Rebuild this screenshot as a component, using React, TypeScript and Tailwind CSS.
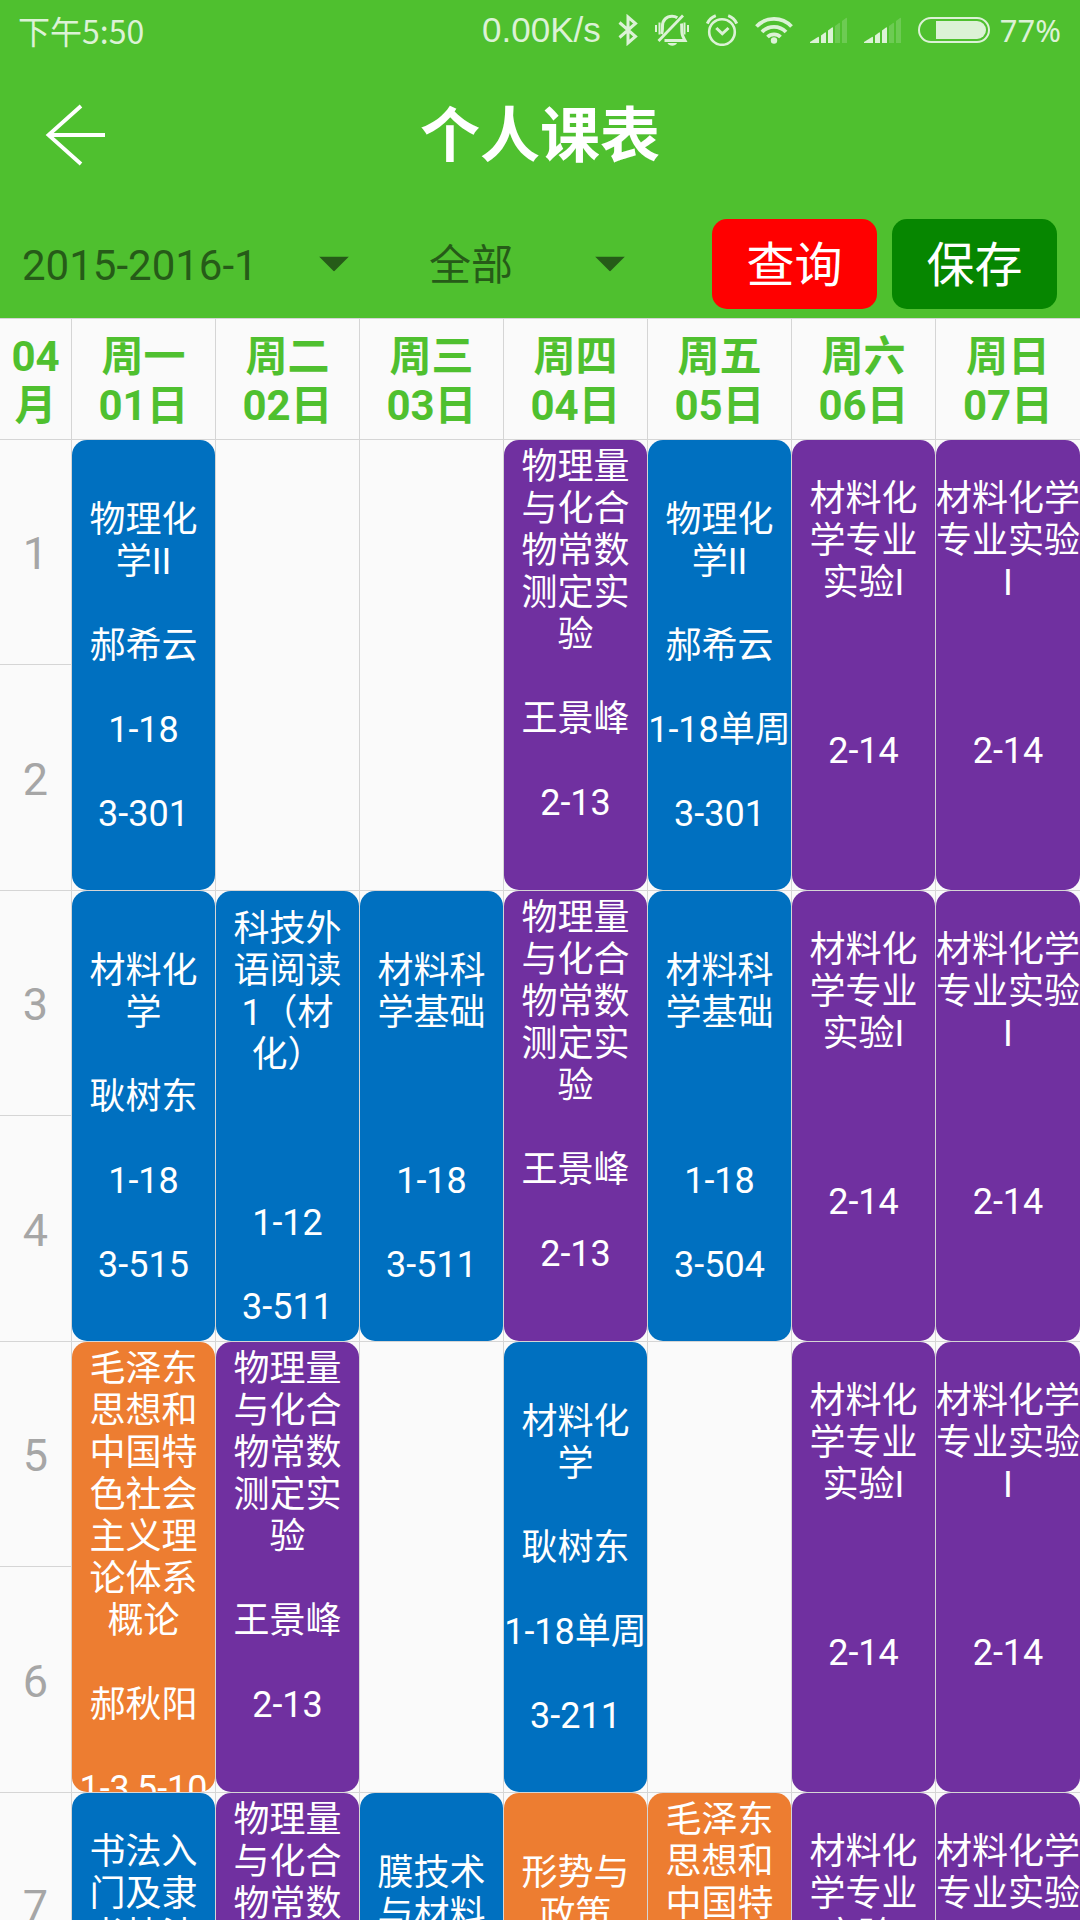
import React from "react";

type Kind = "blue" | "purple" | "orange";

interface Course {
  name: React.ReactNode;
  teacher?: string;
  weeks?: string;
  room?: string;
  kind: Kind;
}

const CARD_COLORS: Record<Kind, string> = {
  blue: "bg-[#0070c0]",
  purple: "bg-[#7030a0]",
  orange: "bg-[#ed7d31]",
};

const DAYS = ["周一", "周二", "周三", "周四", "周五", "周六", "周日"];

const physLab: Course = { name: "物理量与化合物常数测定实验", teacher: "王景峰", weeks: "2-13", kind: "purple" };
const majorLab: Course = { name: "材料化学专业实验I", weeks: "2-14", kind: "purple" };
const maoCourse: Course = {
  name: "毛泽东思想和中国特色社会主义理论体系概论",
  teacher: "郝秋阳",
  weeks: "1-3,5-10",
  kind: "orange",
};
const readingCourse: Course = {
  name: (
    <>
      科技外语阅读<span className="whitespace-nowrap">1（材</span>化）
    </>
  ),
  weeks: "1-12",
  room: "3-511",
  kind: "blue",
};

const BLOCKS: (Course | null)[][] = [
  [
    { name: "物理化学II", teacher: "郝希云", weeks: "1-18", room: "3-301", kind: "blue" },
    null,
    null,
    physLab,
    { name: "物理化学II", teacher: "郝希云", weeks: "1-18单周", room: "3-301", kind: "blue" },
    majorLab,
    majorLab,
  ],
  [
    { name: "材料化学", teacher: "耿树东", weeks: "1-18", room: "3-515", kind: "blue" },
    readingCourse,
    { name: "材料科学基础", weeks: "1-18", room: "3-511", kind: "blue" },
    physLab,
    { name: "材料科学基础", weeks: "1-18", room: "3-504", kind: "blue" },
    majorLab,
    majorLab,
  ],
  [
    maoCourse,
    physLab,
    null,
    { name: "材料化学", teacher: "耿树东", weeks: "1-18单周", room: "3-211", kind: "blue" },
    null,
    majorLab,
    majorLab,
  ],
  [
    { name: "书法入门及隶书技法", kind: "blue" },
    physLab,
    { name: "膜技术与材料", kind: "blue" },
    { name: "形势与政策", kind: "orange" },
    maoCourse,
    majorLab,
    majorLab,
  ],
];

function BluetoothIcon() {
  return (
    <svg width="20" height="32" viewBox="0 0 20 32" fill="none" stroke="currentColor" strokeWidth="3">
      <path d="M1.5 8.5 L17.5 22.5 L10 29 V3 L17.5 9.5 L1.5 23.5" />
    </svg>
  );
}

function MutedBellIcon() {
  return (
    <svg width="34" height="32" viewBox="0 0 34 32" fill="none" stroke="currentColor">
      <path d="M1 11 V18 M4.5 8.5 V20.5 M29.5 8.5 V20.5 M33 11 V18" strokeWidth="2" />
      <path d="M6.5 20 C7.5 18 7.5 16 7.5 12 C7.5 6 11.5 2.2 17 2.2 C19 2.2 20.8 2.7 22.3 3.8" strokeWidth="3" />
      <path d="M26.5 9.5 C27 12 26.4 18 27.4 21 C28 23 29 24.5 30 26.5 H9.5" strokeWidth="3" />
      <path d="M3.5 27 L28 1.5" strokeWidth="2.8" />
      <path d="M12.5 29 H22 C20.5 32.6 14 32.6 12.5 29 Z" fill="currentColor" stroke="none" />
    </svg>
  );
}

function AlarmIcon() {
  return (
    <svg width="32" height="32" viewBox="0 0 32 32" fill="none" stroke="currentColor">
      <circle cx="16" cy="18" r="12.8" strokeWidth="2.6" />
      <path d="M10.3 14 L16.3 19.8 L22.5 14" strokeWidth="3" />
      <path d="M1.3 9.5 C3 5.8 6 3 9.8 1.6 M30.7 9.5 C29 5.8 26 3 22.2 1.6" strokeWidth="3" />
    </svg>
  );
}

function WifiIcon() {
  return (
    <svg width="38" height="28" viewBox="0 0 38 28" fill="none" stroke="currentColor" strokeWidth="3.8">
      <path d="M1.5 10.5 A24 24 0 0 1 36.5 10.5" />
      <path d="M7 16 A16.5 16.5 0 0 1 31 16" />
      <path d="M12.5 21 A9.2 9.2 0 0 1 25.5 21" />
      <circle cx="19" cy="24.5" r="3.2" fill="currentColor" stroke="none" />
    </svg>
  );
}

function SignalIcon() {
  return (
    <svg width="37" height="26" viewBox="0 0 37 26" fill="currentColor">
      <path d="M0 26 V25 L8 20 Q9 19.5 9 20.5 V26 Z" />
      <path d="M11 26 V18.5 L15 15.5 Q16 15 16 16 V26 Z" />
      <path d="M18 26 V13.5 L22 10.5 Q23 10 23 11 V26 Z" />
      <path d="M25 26 V9 L29 6 Q30 5.5 30 6.5 V26 Z" opacity="0.22" />
      <path d="M32 26 V4 L36 1 Q37 .5 37 1.5 V26 Z" opacity="0.22" />
    </svg>
  );
}

function BatteryIcon() {
  return (
    <svg width="72" height="26" viewBox="0 0 72 26" fill="none">
      <rect x="1" y="1" width="70" height="24" rx="12" stroke="currentColor" strokeWidth="2" />
      <path d="M18 4 H59 A9 9 0 0 1 59 22 H18 Z" fill="currentColor" />
    </svg>
  );
}

function StatusBar() {
  return (
    <div className="flex h-[60px] items-center justify-between pl-[18px] pr-[19px] text-[#dcf2d6]">
      <span className="font-['Noto_Sans_CJK_SC',sans-serif] text-[32px] leading-10">下午5:50</span>
      <div className="flex items-center gap-[17px]">
        <span className="font-['Liberation_Sans',sans-serif] text-[35px] leading-10">0.00K/s</span>
        <BluetoothIcon />
        <MutedBellIcon />
        <AlarmIcon />
        <WifiIcon />
        <SignalIcon />
        <SignalIcon />
        <div className="flex items-center gap-[10px]">
          <BatteryIcon />
          <span className="font-['Noto_Sans',sans-serif] text-[31px] leading-10">77%</span>
        </div>
      </div>
    </div>
  );
}

function Spinner({ label, options, width }: { label: string; options: string[]; width: string }) {
  return (
    <div className={`relative ${width}`}>
      <select
        aria-label={label}
        className="w-full appearance-none bg-transparent pt-1 text-[42px] leading-[50px] text-[#265b18] outline-none"
      >
        {options.map((o) => (
          <option key={o}>{o}</option>
        ))}
      </select>
      <svg
        className="pointer-events-none absolute right-0 top-1/2 -translate-y-1/2"
        width="30"
        height="15"
        viewBox="0 0 30 15"
        fill="#265b18"
      >
        <path d="M0 0 H30 L15 15 Z" />
      </svg>
    </div>
  );
}

function CourseCard({ course }: { course: Course }) {
  return (
    <div
      className={`flex h-[450px] flex-col justify-center-safe gap-[42px] overflow-hidden rounded-[15px] pb-[2px] pt-[6px] text-center text-[36px] leading-[42px] text-white ${CARD_COLORS[course.kind]}`}
    >
      <p className="shrink-0">{course.name}</p>
      <p className="min-h-[42px] shrink-0">{course.teacher}</p>
      <p className="min-h-[42px] shrink-0 whitespace-nowrap">{course.weeks}</p>
      <p className="min-h-[42px] shrink-0">{course.room}</p>
    </div>
  );
}

function Timetable() {
  const headCell =
    "border-y border-r border-[#d5d5d5] px-0 pb-[9px] pt-[13px] text-[42px] font-bold leading-[49px] text-[#4fc02f] last:border-r-0";
  const numberCell =
    "border-b border-r border-[#d5d5d5] p-0 pt-1 text-center text-[45px] font-normal text-[#a6a6a6]";
  return (
    <table className="w-full table-fixed border-separate border-spacing-0">
      <colgroup>
        <col className="w-1/15" />
        {DAYS.map((d) => (
          <col key={d} className="w-2/15" />
        ))}
      </colgroup>
      <thead>
        <tr>
          <th scope="col" className={headCell}>
            04
            <br />月
          </th>
          {DAYS.map((d, i) => (
            <th key={d} scope="col" className={headCell}>
              {d}
              <br />0{i + 1}日
            </th>
          ))}
        </tr>
      </thead>
      <tbody>
        {BLOCKS.map((block, b) => (
          <React.Fragment key={b}>
            <tr className="h-[225px]">
              <th scope="row" className={numberCell}>
                {b * 2 + 1}
              </th>
              {block.map((course, d) => (
                <td
                  key={d}
                  rowSpan={2}
                  className="border-b border-r border-[#d5d5d5] p-0 last:border-r-0"
                >
                  {course && <CourseCard course={course} />}
                </td>
              ))}
            </tr>
            <tr className="h-[226px]">
              <th scope="row" className={numberCell}>
                {b * 2 + 2}
              </th>
            </tr>
          </React.Fragment>
        ))}
      </tbody>
    </table>
  );
}

export default function App() {
  return (
    <div
      lang="zh-CN"
      className="flex h-screen flex-col overflow-hidden bg-[#fafafa] font-[Roboto,'Noto_Sans_CJK_SC',sans-serif]"
    >
      <header className="shrink-0 bg-[#4fc02f]">
        <StatusBar />
        <div className="grid h-[150px] grid-cols-[1fr_auto_1fr] items-center">
          <button type="button" aria-label="返回" className="justify-self-start pl-[45px] text-white">
            <svg width="61" height="62" viewBox="0 0 61 62" fill="none" stroke="currentColor" strokeWidth="3.8">
              <path d="M36 2 L3.5 31 L36 60 M3.5 31 H60" />
            </svg>
          </button>
          <h1 className="pt-1 text-[60px] font-bold leading-[72px] text-white">个人课表</h1>
        </div>
        <div className="flex h-[108px] items-center pl-[22px] pr-[23px]">
          <Spinner label="学期" options={["2015-2016-1"]} width="w-[327px]" />
          <div className="ml-20">
            <Spinner label="周次" options={["全部"]} width="w-[196px]" />
          </div>
          <div className="ml-auto flex gap-[15px] text-[48px] text-white">
            <button type="button" className="h-[90px] w-[165px] rounded-[15px] bg-[#ff0000] pt-1">
              查询
            </button>
            <button type="button" className="h-[90px] w-[165px] rounded-[15px] bg-[#068600] pt-1">
              保存
            </button>
          </div>
        </div>
      </header>
      <main className="min-h-0 flex-1 overflow-y-auto [scrollbar-width:none]">
        <Timetable />
      </main>
    </div>
  );
}
